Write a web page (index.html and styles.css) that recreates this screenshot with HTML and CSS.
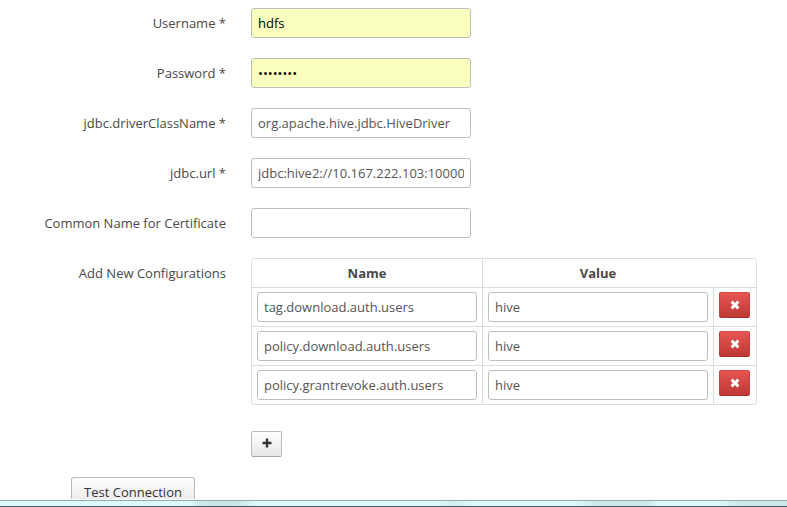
FILE: index.html
```html
<!DOCTYPE html>
<html lang="en">
<head>
<meta charset="utf-8">
<title>Service configuration</title>
<link rel="stylesheet" href="styles.css">
</head>
<body>
<svg width="0" height="0" class="defs">
  <symbol id="remove" viewBox="0 0 10 10"><path d="M2.7 .6 5 2.9 7.3 .6 9.4 2.7 7.1 5 9.4 7.3 7.3 9.4 5 7.1 2.7 9.4 .6 7.3 2.9 5 .6 2.7Z" fill="currentColor"/></symbol>
</svg>
<main class="page">
  <div class="row"><label class="label">Username *</label><input class="field filled" value="hdfs"></div>
  <div class="row"><label class="label">Password *</label><input class="field filled" type="text" value="••••••••"></div>
  <div class="row"><label class="label">jdbc.driverClassName *</label><input class="field" value="org.apache.hive.jdbc.HiveDriver"></div>
  <div class="row"><label class="label">jdbc.url *</label><input class="field" value="jdbc:hive2://10.167.222.103:10000"></div>
  <div class="row"><label class="label">Common Name for Certificate</label><input class="field"></div>
  <div class="row configs">
    <label class="label">Add New Configurations</label>
    <div class="table">
      <div class="tr head"><div>Name</div><div>Value</div><div></div></div>
      <div class="tr"><div><input class="field" value="tag.download.auth.users"></div><div><input class="field" value="hive"></div><div><button class="btn danger"><svg><use href="#remove"/></svg></button></div></div>
      <div class="tr"><div><input class="field" value="policy.download.auth.users"></div><div><input class="field" value="hive"></div><div><button class="btn danger"><svg><use href="#remove"/></svg></button></div></div>
      <div class="tr"><div><input class="field" value="policy.grantrevoke.auth.users"></div><div><input class="field" value="hive"></div><div><button class="btn danger"><svg><use href="#remove"/></svg></button></div></div>
    </div>
  </div>
  <button class="btn add"><svg viewBox="0 0 10 10"><path d="M3.8 .5h2.4v3.3h3.3v2.4H6.2v3.3H3.8V6.2H.5V3.8h3.3Z" fill="currentColor"/></svg></button>
  <button class="btn test">Test Connection</button>
</main>
<footer class="edge"></footer>
</body>
</html>
```
FILE: styles.css
```css
* { box-sizing: border-box; }
body {
  margin: 0;
  height: 507px;
  overflow: hidden;
  background: #fff;
  color: #484848;
  font: 13px/20px "Open Sans", sans-serif;
}
.defs { display: block; }
.page {
  height: 499px;
  padding-top: 8px;
  overflow: hidden;
}
.row {
  display: flex;
  align-items: flex-start;
  gap: 25px;
  margin-bottom: 20px;
}
.label {
  width: 226px;
  padding-top: 5px;
  text-align: right;
}
.field {
  display: block;
  width: 220px;
  height: 30px;
  padding: 4px 6px;
  border: 1px solid #bbc0be;
  border-radius: 3px;
  background: #fff;
  color: #555;
  font: inherit;
  outline: 0;
}
.filled {
  background: #faffbd;
  color: #000;
}
.configs { margin-bottom: 26px; }
.table {
  width: 506px;
  border: 1px solid #d9dddd;
  border-radius: 3px;
}
.tr {
  display: grid;
  grid-template-columns: 230px 231px 43px;
  height: 39px;
  border-top: 1px solid #d9dddd;
}
.tr > div { padding: 4px 5px; }
.tr > div + div { border-left: 1px solid #d9dddd; }
.head {
  height: 28px;
  border-top: 0;
  font-weight: 700;
  text-align: center;
}
.tr.head > div:last-child { border-left: 0; }
.btn {
  display: flex;
  align-items: center;
  justify-content: center;
  width: 31px;
  height: 26px;
  padding: 0;
  border: 1px solid #bbb;
  border-bottom-color: #a8a8a8;
  border-radius: 2px;
  background: linear-gradient(#fff, #e6e6e6);
  color: #333;
  font: inherit;
}
.btn svg { width: 10px; height: 10px; }
.danger {
  border-color: #d04c48 #c5413d #a9302c;
  background: linear-gradient(#e65653, #be3833);
  color: #fff;
}
.add { margin-left: 251px; }
.add svg { margin-bottom: 2px; }
.test {
  width: 124px;
  height: 30px;
  margin: 20px 0 0 71px;
  border-radius: 3px;
}
.edge {
  height: 7px;
  margin-top: 1px;
  border-top: 1px solid #93aaa7;
  border-bottom: 1px solid #465963;
  background: linear-gradient(90deg, #dcfafa 0 24%, #c8e6e6 26% 30%, #dcfafa 33% 55%, #d2f0f0 57% 58%, #dcfafa 60% 73%, #cae8e8 76% 82%, #dcfafa 84% 91%, #cae8e8 94%);
}
```
